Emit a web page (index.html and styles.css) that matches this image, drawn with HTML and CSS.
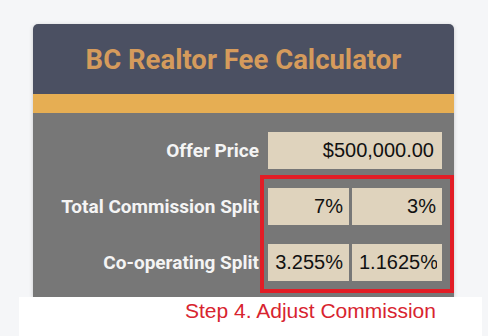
FILE: index.html
```html
<!DOCTYPE html>
<html>
<head>
<meta charset="utf-8">
<link rel="stylesheet" href="styles.css">
</head>
<body>
<div class="card">
  <div class="card-header">
    <h1 class="title">BC Realtor Fee Calculator</h1>
  </div>
  <div class="accent-bar"></div>
  <div class="card-body">
    <div class="form-grid">
      <label class="label">Offer Price</label>
      <div class="field">
        <input class="input input-full" type="text" value="$500,000.00">
      </div>
      <label class="label">Total Commission Split</label>
      <div class="field split">
        <input class="input input-a" type="text" value="7%">
        <input class="input input-b" type="text" value="3%">
      </div>
      <label class="label">Co-operating Split</label>
      <div class="field split">
        <input class="input input-a" type="text" value="3.255%">
        <input class="input input-b input-clip" type="text" value="1.1625%">
      </div>
    </div>
    <div class="highlight"></div>
  </div>
</div>
<div class="caption">
  <span class="caption-text">Step 4. Adjust Commission</span>
</div>
</body>
</html>
```
FILE: styles.css
```css
html, body {
  margin: 0;
  padding: 0;
}
body {
  background: #f5f6f8;
  width: 488px;
  height: 336px;
  overflow: hidden;
  font-family: Roboto, "Liberation Sans", sans-serif;
}
.card {
  margin: 24px 0 0 33px;
  width: 421px;
  border-radius: 5px 5px 0 0;
  box-shadow: 0 1px 4px rgba(0, 0, 0, 0.18);
}
.card-header {
  background: #4b5062;
  height: 70px;
  border-radius: 5px 5px 0 0;
  display: flex;
  align-items: center;
  justify-content: center;
}
.title {
  margin: 0;
  color: #d59b5c;
  font-family: Roboto, "Liberation Sans", sans-serif;
  font-weight: 700;
  font-size: 27.5px;
  letter-spacing: 0;
}
.accent-bar {
  background: #e6ae53;
  height: 19px;
}
.card-body {
  position: relative;
  background: #777777;
  padding: 19px 12px 16px 0;
}
.form-grid {
  display: grid;
  grid-template-columns: 1fr 174px;
  column-gap: 9px;
  row-gap: 19px;
  align-items: center;
}
.label {
  text-align: right;
  color: #f4f4f4;
  font-weight: 700;
  font-size: 19px;
}
.field {
  display: flex;
  gap: 3px;
}
.input {
  box-sizing: border-box;
  height: 37px;
  border: none;
  margin: 0;
  background: #dfd3bd;
  font-family: "Liberation Sans", Arial, sans-serif;
  font-size: 20px;
  color: #111;
  text-align: right;
  padding: 0 6px;
  outline: none;
}
.input-full {
  width: 174px;
  padding-right: 8px;
}
.input-a {
  width: 81px;
}
.input-b {
  width: 90px;
}
.input-clip {
  padding: 0 5px 0 7px;
}
.highlight {
  position: absolute;
  left: 227px;
  top: 62px;
  width: 194px;
  height: 118px;
  box-sizing: border-box;
  border: 4px solid #e21d26;
}
.caption {
  margin-left: 19px;
  width: 463px;
  height: 40px;
  background: #ffffff;
  position: relative;
}
.caption-text {
  display: block;
  padding: 2px 0 0 166px;
  font-family: "Liberation Sans", Arial, sans-serif;
  font-size: 21px;
  color: #d8242f;
  line-height: 24px;
}
```
